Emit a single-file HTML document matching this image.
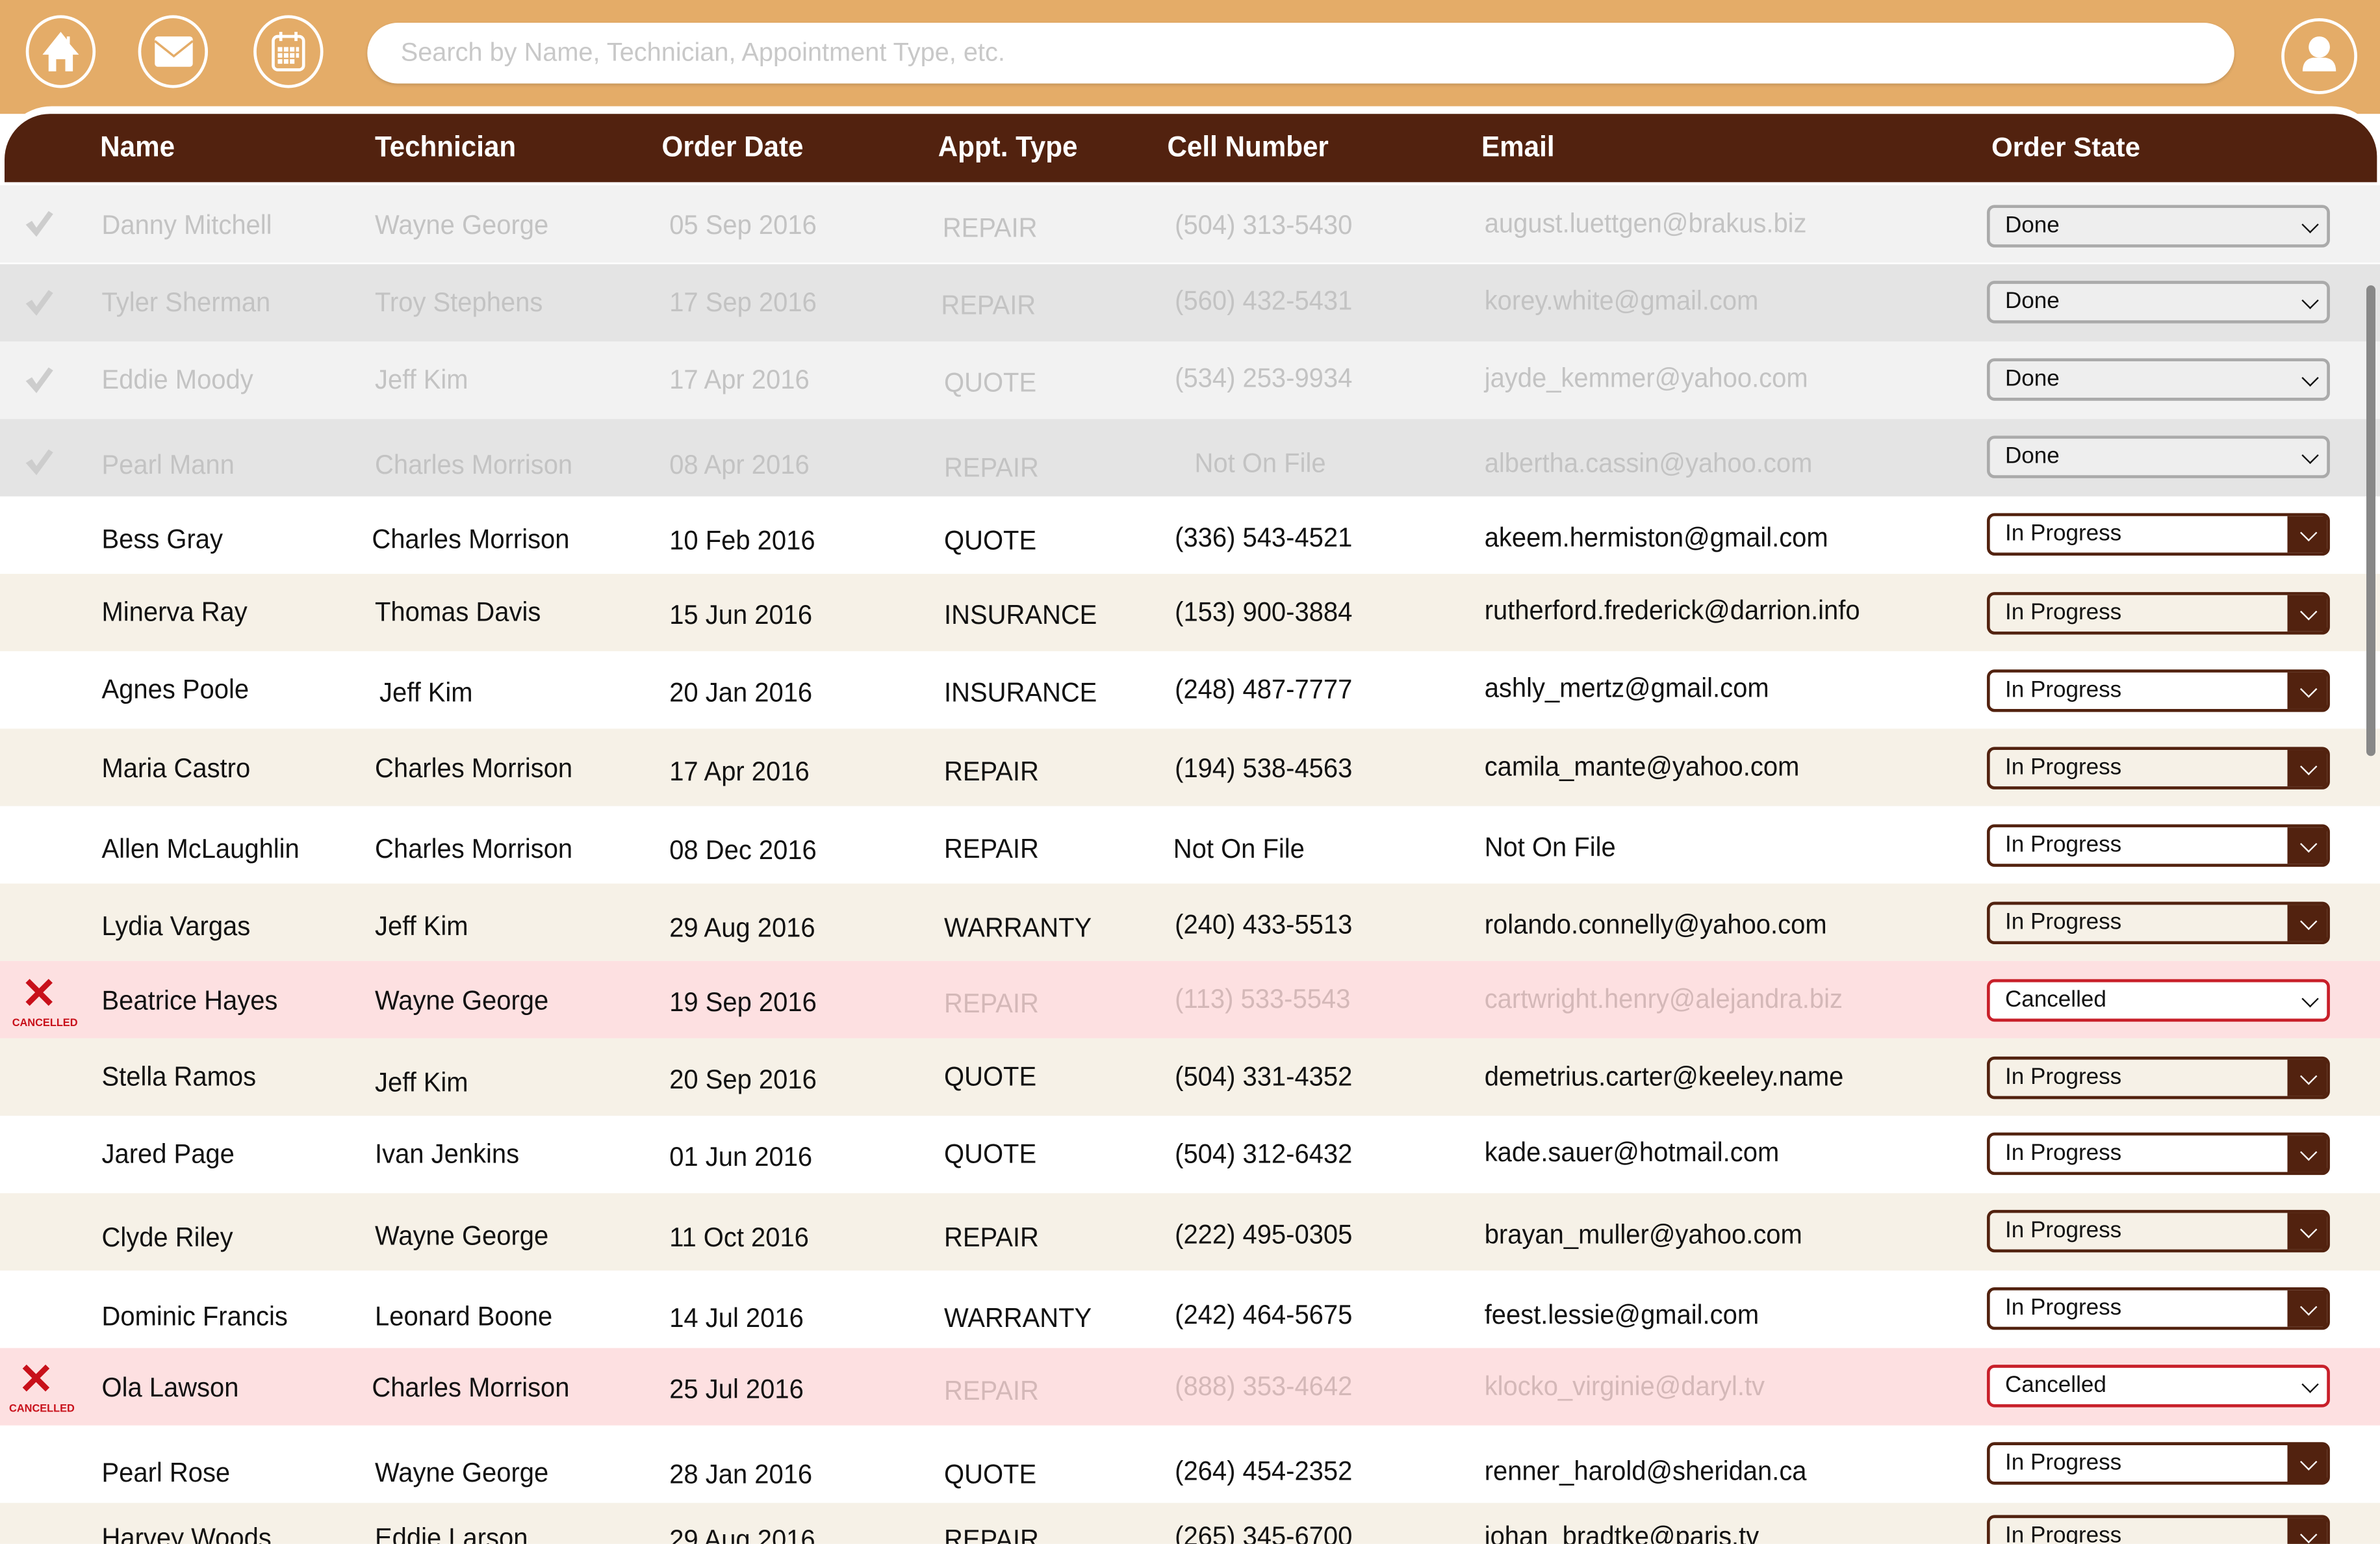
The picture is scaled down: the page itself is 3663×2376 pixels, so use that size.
<!DOCTYPE html>
<html><head><meta charset="utf-8">
<style>
html,body{margin:0;padding:0;width:3663px;height:2375px;overflow:hidden;background:#fff}
#s{position:absolute;left:0;top:0;width:1568px;height:1017px;transform:scale(2.33610);transform-origin:0 0;overflow:hidden;font-family:"Liberation Sans Narrow","Liberation Sans",sans-serif;font-stretch:condensed}
.top{position:absolute;left:0;top:0;width:1568px;height:75px;background:#e4ac68}
.ic{position:absolute;top:10px;width:46px;height:48px;border:2px solid #fff;border-radius:50%;box-sizing:border-box}
.search{position:absolute;left:242px;top:15px;width:1230px;height:40px;background:#fff;border-radius:20px;box-shadow:0 1px 2px rgba(0,0,0,.15);font-family:"Liberation Sans",sans-serif;font-size:17px;color:#c8c8c8;line-height:40px;padding-left:22px;box-sizing:border-box}
.hdr{position:absolute;left:0;top:70px;width:1568px;height:52px;background:#fff;border-radius:34px 32px 0 0}
.hdr2{position:absolute;left:3px;top:75px;width:1563px;height:45px;background:#52220f;border-radius:30px 28px 0 0}
.h{position:absolute;top:87px;color:#fff;font-size:19px;font-weight:bold;transform:scaleX(.95);transform-origin:0 0}
.row{position:absolute;left:0;width:1568px;height:51px}
.c{position:absolute;font-size:18px;color:#111;white-space:nowrap;transform:scaleX(.95);transform-origin:0 0}
.d .c{color:#c3c3c3}
.x .c.m{color:#d4b8b8}
.dd{position:absolute;left:1309px;width:226px;height:28px;box-sizing:border-box;border-radius:5px;font-family:"Liberation Sans",sans-serif;font-size:15px;line-height:24px;padding-left:10px;color:#111}
.dn{border:2px solid #aaa;background:#eee}
.ip{border:2px solid #52220f}
.ip:after{content:"";position:absolute;right:0;top:0;width:26px;height:24px;background:#52220f}
.cn{border:2px solid #c8202a;background:#fff}
.ch{position:absolute;right:7px;top:7px;width:7px;height:7px;border-right:1.5px solid #111;border-bottom:1.5px solid #111;transform:rotate(45deg);z-index:2}
.ip .ch{border-color:#fff;right:8px}
.chk{position:absolute;left:15px;width:22px;height:22px}
.xx{position:absolute;left:14px;color:#c8101a;font-size:28px;font-weight:bold;font-family:"Liberation Sans",sans-serif;line-height:28px}
.xl{position:absolute;left:8px;color:#c8101a;font-size:7px;font-weight:bold}
.sb{position:absolute;left:1559px;top:188px;width:6px;height:310px;background:#888;border-radius:3px}
</style></head><body><div id="s">
<svg width="0" height="0" style="position:absolute"><defs><symbol id="ck" viewBox="0 0 22 22"><path d="M2 12 L6 9.5 L9 14 L17 3 L20 5 L9 20 Z" fill="#cdcdcd"/></symbol></defs></svg>
<div class="top"></div>
<div class="ic" style="left:17px"><svg width="42" height="44" viewBox="0 0 42 44"><path d="M21 9 L9 24 H13 V35 H18 V27 H24 V35 H29 V24 H33 L27 17 V12 H25 V14 Z" fill="#fff"/></svg></div>
<div class="ic" style="left:91px"><svg width="42" height="44" viewBox="0 0 42 44"><rect x="9" y="12" width="25" height="20" rx="2" fill="#fff"/><path d="M9 15 L21.5 25 L34 15" stroke="#e4ac68" stroke-width="1.5" fill="none"/></svg></div>
<div class="ic" style="left:167px"><svg width="42" height="44" viewBox="0 0 42 44"><rect x="11" y="12" width="20" height="22" rx="3" fill="none" stroke="#fff" stroke-width="2"/><line x1="16" y1="9" x2="16" y2="15" stroke="#fff" stroke-width="2"/><line x1="26" y1="9" x2="26" y2="15" stroke="#fff" stroke-width="2"/><g fill="#fff"><rect x="14" y="19" width="3" height="3"/><rect x="18" y="19" width="3" height="3"/><rect x="22" y="19" width="3" height="3"/><rect x="26" y="19" width="2" height="3"/><rect x="14" y="23" width="3" height="3"/><rect x="18" y="23" width="3" height="3"/><rect x="22" y="23" width="3" height="3"/><rect x="26" y="23" width="2" height="3"/><rect x="14" y="27" width="3" height="3"/><rect x="18" y="27" width="3" height="3"/><rect x="22" y="27" width="3" height="3"/></g></svg></div>
<div class="search">Search by Name, Technician, Appointment Type, etc.</div>
<div class="ic" style="left:1503px;top:12px;width:50px;height:50px"><svg width="46" height="46" viewBox="0 0 46 46"><circle cx="23" cy="17" r="7" fill="#fff"/><path d="M12 33 Q12 25 19 24 L27 24 Q34 25 34 33 Z" fill="#fff"/></svg></div>
<div class="hdr"></div><div class="hdr2"></div>
<div class="h" style="left:66px">Name</div><div class="h" style="left:247px">Technician</div><div class="h" style="left:436px">Order Date</div><div class="h" style="left:618px">Appt. Type</div><div class="h" style="left:769px">Cell Number</div><div class="h" style="left:976px">Email</div><div class="h" style="left:1312px;font-family:'Liberation Sans',sans-serif;font-size:18px;transform:none">Order State</div>

<div class="row d" style="top:122px;background:#f2f2f2"><svg class="chk" style="top:14px"><use href="#ck"/></svg><span class="c" style="left:67px;top:16px">Danny Mitchell</span><span class="c" style="left:247px;top:16px">Wayne George</span><span class="c" style="left:441px;top:16px">05 Sep 2016</span><span class="c" style="left:621px;top:18px">REPAIR</span><span class="c" style="left:774px;top:16px">(504) 313-5430</span><span class="c" style="left:978px;top:15px">august.luettgen@brakus.biz</span><div class="dd dn" style="top:13px">Done<i class="ch"></i></div></div>
<div class="row d" style="top:174px;background:#e4e4e4"><svg class="chk" style="top:14px"><use href="#ck"/></svg><span class="c" style="left:67px;top:15px">Tyler Sherman</span><span class="c" style="left:247px;top:15px">Troy Stephens</span><span class="c" style="left:441px;top:15px">17 Sep 2016</span><span class="c" style="left:620px;top:17px">REPAIR</span><span class="c" style="left:774px;top:14px">(560) 432-5431</span><span class="c" style="left:978px;top:14px">korey.white@gmail.com</span><div class="dd dn" style="top:11px">Done<i class="ch"></i></div></div>
<div class="row d" style="top:225px;background:#f2f2f2"><svg class="chk" style="top:14px"><use href="#ck"/></svg><span class="c" style="left:67px;top:15px">Eddie Moody</span><span class="c" style="left:247px;top:15px">Jeff Kim</span><span class="c" style="left:441px;top:15px">17 Apr 2016</span><span class="c" style="left:622px;top:17px">QUOTE</span><span class="c" style="left:774px;top:14px">(534) 253-9934</span><span class="c" style="left:978px;top:14px">jayde_kemmer@yahoo.com</span><div class="dd dn" style="top:11px">Done<i class="ch"></i></div></div>
<div class="row d" style="top:276px;background:#e4e4e4"><svg class="chk" style="top:17px"><use href="#ck"/></svg><span class="c" style="left:67px;top:20px">Pearl Mann</span><span class="c" style="left:247px;top:20px">Charles Morrison</span><span class="c" style="left:441px;top:20px">08 Apr 2016</span><span class="c" style="left:622px;top:22px">REPAIR</span><span class="c" style="left:787px;top:19px">Not On File</span><span class="c" style="left:978px;top:19px">albertha.cassin@yahoo.com</span><div class="dd dn" style="top:11px">Done<i class="ch"></i></div></div>

<div class="row" style="top:327px;background:#fff"><span class="c" style="left:67px;top:18px">Bess Gray</span><span class="c" style="left:245px;top:18px">Charles Morrison</span><span class="c" style="left:441px;top:19px">10 Feb 2016</span><span class="c" style="left:622px;top:19px">QUOTE</span><span class="c" style="left:774px;top:17px">(336) 543-4521</span><span class="c" style="left:978px;top:17px">akeem.hermiston@gmail.com</span><div class="dd ip" style="top:11px">In Progress<i class="ch"></i></div></div>
<div class="row" style="top:378px;background:#f6f1e7"><span class="c" style="left:67px;top:15px">Minerva Ray</span><span class="c" style="left:247px;top:15px">Thomas Davis</span><span class="c" style="left:441px;top:17px">15 Jun 2016</span><span class="c" style="left:622px;top:17px">INSURANCE</span><span class="c" style="left:774px;top:15px">(153) 900-3884</span><span class="c" style="left:978px;top:14px">rutherford.frederick@darrion.info</span><div class="dd ip" style="top:12px">In Progress<i class="ch"></i></div></div>
<div class="row" style="top:429px;background:#fff"><span class="c" style="left:67px;top:15px">Agnes Poole</span><span class="c" style="left:250px;top:17px">Jeff Kim</span><span class="c" style="left:441px;top:17px">20 Jan 2016</span><span class="c" style="left:622px;top:17px">INSURANCE</span><span class="c" style="left:774px;top:15px">(248) 487-7777</span><span class="c" style="left:978px;top:14px">ashly_mertz@gmail.com</span><div class="dd ip" style="top:12px">In Progress<i class="ch"></i></div></div>
<div class="row" style="top:480px;background:#f6f1e7"><span class="c" style="left:67px;top:16px">Maria Castro</span><span class="c" style="left:247px;top:16px">Charles Morrison</span><span class="c" style="left:441px;top:18px">17 Apr 2016</span><span class="c" style="left:622px;top:18px">REPAIR</span><span class="c" style="left:774px;top:16px">(194) 538-4563</span><span class="c" style="left:978px;top:15px">camila_mante@yahoo.com</span><div class="dd ip" style="top:12px">In Progress<i class="ch"></i></div></div>
<div class="row" style="top:531px;background:#fff"><span class="c" style="left:67px;top:18px">Allen McLaughlin</span><span class="c" style="left:247px;top:18px">Charles Morrison</span><span class="c" style="left:441px;top:19px">08 Dec 2016</span><span class="c" style="left:622px;top:18px">REPAIR</span><span class="c" style="left:773px;top:18px">Not On File</span><span class="c" style="left:978px;top:17px">Not On File</span><div class="dd ip" style="top:12px">In Progress<i class="ch"></i></div></div>
<div class="row" style="top:582px;background:#f6f1e7"><span class="c" style="left:67px;top:18px">Lydia Vargas</span><span class="c" style="left:247px;top:18px">Jeff Kim</span><span class="c" style="left:441px;top:19px">29 Aug 2016</span><span class="c" style="left:622px;top:19px">WARRANTY</span><span class="c" style="left:774px;top:17px">(240) 433-5513</span><span class="c" style="left:978px;top:17px">rolando.connelly@yahoo.com</span><div class="dd ip" style="top:12px">In Progress<i class="ch"></i></div></div>
<div class="row x" style="top:633px;background:#fde0e1"><span class="xx" style="top:8px">✕</span><span class="xl" style="top:38px">CANCELLED</span><span class="c" style="left:67px;top:16px">Beatrice Hayes</span><span class="c" style="left:247px;top:16px">Wayne George</span><span class="c" style="left:441px;top:17px">19 Sep 2016</span><span class="c m" style="left:622px;top:18px">REPAIR</span><span class="c m" style="left:774px;top:15px">(113) 533-5543</span><span class="c m" style="left:978px;top:15px">cartwright.henry@alejandra.biz</span><div class="dd cn" style="top:12px">Cancelled<i class="ch"></i></div></div>
<div class="row" style="top:684px;background:#f6f1e7"><span class="c" style="left:67px;top:15px">Stella Ramos</span><span class="c" style="left:247px;top:19px">Jeff Kim</span><span class="c" style="left:441px;top:17px">20 Sep 2016</span><span class="c" style="left:622px;top:15px">QUOTE</span><span class="c" style="left:774px;top:15px">(504) 331-4352</span><span class="c" style="left:978px;top:15px">demetrius.carter@keeley.name</span><div class="dd ip" style="top:12px">In Progress<i class="ch"></i></div></div>
<div class="row" style="top:735px;background:#fff"><span class="c" style="left:67px;top:15px">Jared Page</span><span class="c" style="left:247px;top:15px">Ivan Jenkins</span><span class="c" style="left:441px;top:17px">01 Jun 2016</span><span class="c" style="left:622px;top:15px">QUOTE</span><span class="c" style="left:774px;top:15px">(504) 312-6432</span><span class="c" style="left:978px;top:14px">kade.sauer@hotmail.com</span><div class="dd ip" style="top:11px">In Progress<i class="ch"></i></div></div>
<div class="row" style="top:786px;background:#f6f1e7"><span class="c" style="left:67px;top:19px">Clyde Riley</span><span class="c" style="left:247px;top:18px">Wayne George</span><span class="c" style="left:441px;top:19px">11 Oct 2016</span><span class="c" style="left:622px;top:19px">REPAIR</span><span class="c" style="left:774px;top:17px">(222) 495-0305</span><span class="c" style="left:978px;top:17px">brayan_muller@yahoo.com</span><div class="dd ip" style="top:11px">In Progress<i class="ch"></i></div></div>
<div class="row" style="top:837px;background:#fff"><span class="c" style="left:67px;top:20px">Dominic Francis</span><span class="c" style="left:247px;top:20px">Leonard Boone</span><span class="c" style="left:441px;top:21px">14 Jul 2016</span><span class="c" style="left:622px;top:21px">WARRANTY</span><span class="c" style="left:774px;top:19px">(242) 464-5675</span><span class="c" style="left:978px;top:19px">feest.lessie@gmail.com</span><div class="dd ip" style="top:11px">In Progress<i class="ch"></i></div></div>
<div class="row x" style="top:888px;background:#fde0e1"><span class="xx" style="left:12px;top:7px">✕</span><span class="xl" style="left:6px;top:37px">CANCELLED</span><span class="c" style="left:67px;top:16px">Ola Lawson</span><span class="c" style="left:245px;top:16px">Charles Morrison</span><span class="c" style="left:441px;top:17px">25 Jul 2016</span><span class="c m" style="left:622px;top:18px">REPAIR</span><span class="c m" style="left:774px;top:15px">(888) 353-4642</span><span class="c m" style="left:978px;top:15px">klocko_virginie@daryl.tv</span><div class="dd cn" style="top:11px">Cancelled<i class="ch"></i></div></div>
<div class="row" style="top:939px;background:#fff"><span class="c" style="left:67px;top:21px">Pearl Rose</span><span class="c" style="left:247px;top:21px">Wayne George</span><span class="c" style="left:441px;top:22px">28 Jan 2016</span><span class="c" style="left:622px;top:22px">QUOTE</span><span class="c" style="left:774px;top:20px">(264) 454-2352</span><span class="c" style="left:978px;top:20px">renner_harold@sheridan.ca</span><div class="dd ip" style="top:11px">In Progress<i class="ch"></i></div></div>
<div class="row" style="top:990px;background:#f6f1e7"><span class="c" style="left:67px;top:13px">Harvey Woods</span><span class="c" style="left:247px;top:13px">Eddie Larson</span><span class="c" style="left:441px;top:14px">29 Aug 2016</span><span class="c" style="left:622px;top:14px">REPAIR</span><span class="c" style="left:774px;top:12px">(265) 345-6700</span><span class="c" style="left:978px;top:12px">johan_bradtke@paris.tv</span><div class="dd ip" style="top:8px">In Progress<i class="ch"></i></div></div>
<div class="sb"></div>
</div></body></html>
